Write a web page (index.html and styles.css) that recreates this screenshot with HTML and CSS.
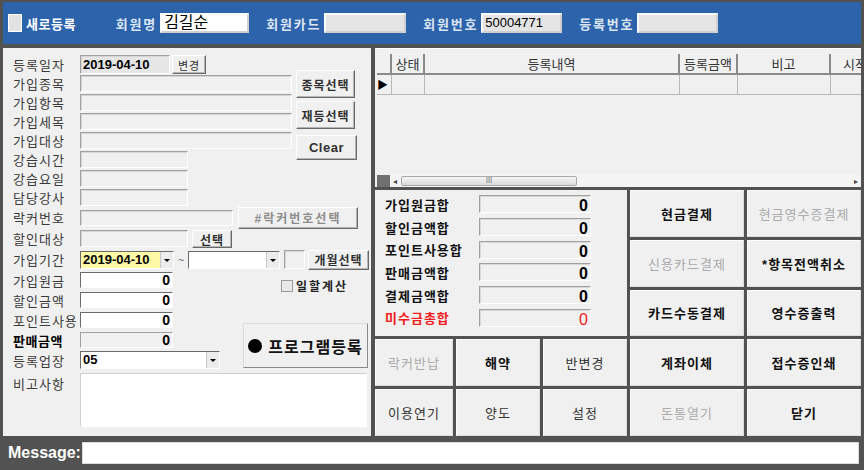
FILE: index.html
```html
<!DOCTYPE html>
<html lang="ko">
<head>
    <meta charset="UTF-8">
    <title>프로그램 등록</title>
    <link rel="stylesheet" href="styles.css">
</head>
<body>
<div class="window">
    <!-- 상단 회원 정보 -->
    <header class="topbar">
        <span class="new-box"></span>
        <span class="new-label">새로등록</span>
        <span class="hdr-label first">회원명</span>
        <span class="hdr-input name">김길순</span>
        <span class="hdr-label">회원카드</span>
        <span class="hdr-input card"></span>
        <span class="hdr-label">회원번호</span>
        <span class="hdr-input">50004771</span>
        <span class="hdr-label">등록번호</span>
        <span class="hdr-input"></span>
    </header>

    <div class="main">
        <!-- 등록 입력 폼 -->
        <section class="form-panel">
            <div class="form-top">
                <div class="form-rows">
                    <div class="row">
                        <span class="lbl">등록일자</span>
                        <span class="field date">2019-04-10</span>
                        <button class="btn tiny">변경</button>
                    </div>
                    <div class="row"><span class="lbl">가입종목</span><span class="field wide"></span></div>
                    <div class="row"><span class="lbl">가입항목</span><span class="field wide"></span></div>
                    <div class="row"><span class="lbl">가입세목</span><span class="field wide"></span></div>
                    <div class="row"><span class="lbl">가입대상</span><span class="field wide"></span></div>
                    <div class="row"><span class="lbl">강습시간</span><span class="field mid"></span></div>
                    <div class="row"><span class="lbl">강습요일</span><span class="field mid"></span></div>
                    <div class="row"><span class="lbl">담당강사</span><span class="field mid"></span></div>
                </div>
                <div class="side-btns">
                    <button class="btn side">종목선택</button>
                    <button class="btn side">재등선택</button>
                    <button class="btn side clear">Clear</button>
                </div>
            </div>

            <div class="row tall">
                <span class="lbl">락커번호</span>
                <span class="field locker"></span>
                <button class="btn locker-btn">#락커번호선택</button>
            </div>
            <div class="row tall">
                <span class="lbl">할인대상</span>
                <span class="field mid"></span>
                <button class="btn pick">선택</button>
            </div>
            <div class="row tall">
                <span class="lbl">가입기간</span>
                <span class="combo from">2019-04-10<i class="drop"></i></span>
                <span class="tilde">~</span>
                <span class="combo to"><i class="drop"></i></span>
                <span class="field months"></span>
                <button class="btn month-btn">개월선택</button>
            </div>

            <div class="form-bottom">
                <div class="money-rows">
                    <div class="row money"><span class="lbl">가입원금</span><span class="field amount">0</span></div>
                    <div class="row money"><span class="lbl">할인금액</span><span class="field amount">0</span></div>
                    <div class="row money"><span class="lbl">포인트사용</span><span class="field amount">0</span></div>
                    <div class="row money"><span class="lbl strong">판매금액</span><span class="field amount off">0</span></div>
                    <div class="row money">
                        <span class="lbl">등록업장</span>
                        <span class="combo place">05<i class="drop"></i></span>
                    </div>
                </div>
                <div class="money-side">
                    <label class="check"><span class="check-box"></span>일할계산</label>
                    <button class="btn register"><span class="dot"></span>프로그램등록</button>
                </div>
            </div>

            <div class="row memo">
                <span class="lbl">비고사항</span>
                <span class="memo-box"></span>
            </div>
        </section>

        <section class="right-col">
            <!-- 등록 내역 그리드 -->
            <div class="grid-panel">
                <table class="grid">
                    <colgroup>
                        <col class="c-sel"><col class="c-state"><col class="c-desc">
                        <col class="c-amt"><col class="c-note"><col class="c-start">
                    </colgroup>
                    <thead>
                        <tr><th></th><th>상태</th><th>등록내역</th><th>등록금액</th><th>비고</th><th class="start">시작</th></tr>
                    </thead>
                    <tbody>
                        <tr><td class="sel">&#9654;</td><td></td><td></td><td></td><td></td><td></td></tr>
                    </tbody>
                </table>
                <div class="hscroll">
                    <span class="corner"></span>
                    <span class="arrow">&#9666;</span>
                    <span class="thumb">&#8546;</span>
                    <span class="track"></span>
                    <span class="arrow">&#9656;</span>
                </div>
            </div>

            <!-- 합계 및 결제 버튼 -->
            <div class="pay-area">
                <div class="totals">
                    <div class="sum-row"><span class="sum-lbl">가입원금합</span><span class="sum-val">0</span></div>
                    <div class="sum-row"><span class="sum-lbl">할인금액합</span><span class="sum-val">0</span></div>
                    <div class="sum-row"><span class="sum-lbl">포인트사용합</span><span class="sum-val">0</span></div>
                    <div class="sum-row"><span class="sum-lbl">판매금액합</span><span class="sum-val">0</span></div>
                    <div class="sum-row"><span class="sum-lbl">결제금액합</span><span class="sum-val">0</span></div>
                    <div class="sum-row due"><span class="sum-lbl">미수금총합</span><span class="sum-val">0</span></div>
                </div>
                <button class="pay-btn bold">현금결제</button>
                <button class="pay-btn off">현금영수증결제</button>
                <button class="pay-btn off">신용카드결제</button>
                <button class="pay-btn bold">*항목전액취소</button>
                <button class="pay-btn bold">카드수동결제</button>
                <button class="pay-btn bold">영수증출력</button>
                <button class="pay-btn off">락커반납</button>
                <button class="pay-btn bold">해약</button>
                <button class="pay-btn">반변경</button>
                <button class="pay-btn bold">계좌이체</button>
                <button class="pay-btn bold">접수증인쇄</button>
                <button class="pay-btn">이용연기</button>
                <button class="pay-btn">양도</button>
                <button class="pay-btn">설정</button>
                <button class="pay-btn off">돈통열기</button>
                <button class="pay-btn bold">닫기</button>
            </div>
        </section>
    </div>

    <footer class="msgbar">
        <span class="msg-label">Message:</span>
        <span class="msg-input"></span>
    </footer>
</div>
</body>
</html>
```

FILE: styles.css
```css
* {
    margin: 0;
    padding: 0;
    box-sizing: border-box;
}

:root {
    --frame: #525252;
    --blue: #2d63ab;
    --face: #f0f0f0;
    --text: #303030;
    --shade: #a0a0a0;
    --dark: #6a6a6a;
}

body {
    width: 864px;
    height: 470px;
    background: var(--frame);
    font-family: "Liberation Sans", "Noto Sans CJK KR", sans-serif;
    color: var(--text);
    overflow: hidden;
}

.window {
    padding: 2px 3px 0 3px;
}

button {
    font-family: inherit;
    color: inherit;
    background: var(--face);
}

/* top bar */
.topbar {
    height: 42px;
    background: var(--blue);
    display: flex;
    align-items: center;
    padding-left: 5px;
}

.new-box {
    width: 14px;
    height: 18px;
    background: #e2e2e2;
    border: 1px solid #fff;
}

.new-label {
    margin-left: 4px;
    color: #fff;
    font-weight: bold;
    font-size: 13px;
    letter-spacing: 0.5px;
}

.hdr-label {
    margin-left: 17px;
    color: #dbe6f6;
    font-weight: bold;
    font-size: 13px;
    letter-spacing: 1.8px;
}

.hdr-label.first {
    margin-left: 40px;
}

.hdr-input {
    margin-left: 3px;
    width: 81px;
    height: 20px;
    background: #e4e4e4;
    border: 2px solid #fafafa;
    border-right-color: #d0d0d0;
    border-bottom-color: #d0d0d0;
    font-size: 13px;
    line-height: 16px;
    padding-left: 2px;
    color: #000;
}

.hdr-input.name {
    width: 89px;
    background: #fff;
    font-size: 16px;
    line-height: 16px;
}

.hdr-input.card {
    width: 82px;
}

/* main layout */
.main {
    margin-top: 4px;
    height: 388px;
    display: grid;
    grid-template-columns: 368px 486px;
    column-gap: 4px;
}

/* left form */
.form-panel {
    background: var(--face);
    padding: 7px 0 0 10px;
    font-size: 13px;
}

.form-top {
    display: flex;
}

.form-rows {
    width: 283px;
}

.row {
    display: flex;
    align-items: center;
    height: 19px;
}

.row.tall {
    height: 21px;
}

.lbl {
    width: 67px;
    flex-shrink: 0;
    font-size: 13px;
    letter-spacing: 1px;
    color: #3a3a3a;
    white-space: nowrap;
}

.lbl.strong {
    font-weight: bold;
    color: #000;
    letter-spacing: 0.5px;
}

.field {
    height: 17px;
    background: var(--face);
    border: 1px solid;
    border-color: var(--shade) #fff #fff var(--shade);
    box-shadow: inset 1px 1px 0 #d6d6d6;
}

.field.date {
    width: 90px;
    height: 19px;
    background: #e6e6e6;
    font-weight: bold;
    color: #000;
    font-size: 13px;
    line-height: 17px;
    padding-left: 2px;
}

.field.wide {
    width: 212px;
}

.field.mid {
    width: 108px;
}

.field.locker {
    width: 153px;
    height: 16px;
}

.field.months {
    width: 21px;
    height: 19px;
    margin-left: 4px;
}

.btn {
    border: 1px solid;
    border-color: #fff var(--dark) var(--dark) #fff;
    box-shadow: inset -1px -1px 0 #b4b4b4;
    font-weight: bold;
    font-size: 12px;
    letter-spacing: 1px;
    cursor: pointer;
}

.btn.tiny {
    margin-left: 2px;
    width: 34px;
    height: 19px;
    font-size: 11px;
    font-weight: normal;
}

.side-btns {
    display: flex;
    flex-direction: column;
    padding-top: 15px;
}

.btn.side {
    width: 59px;
    height: 28px;
    margin-bottom: 3px;
}

.btn.clear {
    margin-top: 3px;
    width: 61px;
    height: 25px;
    font-size: 13px;
    letter-spacing: 0.5px;
}

.btn.locker-btn {
    margin-left: 5px;
    width: 120px;
    height: 22px;
    color: #8c8c8c;
    letter-spacing: 2px;
}

.btn.pick {
    margin-left: 4px;
    width: 40px;
    height: 18px;
}

.combo {
    position: relative;
    height: 18px;
    border: 1px solid;
    border-color: var(--dark) #fff #fff var(--dark);
    background: #fff;
    font-weight: bold;
    color: #000;
    font-size: 13px;
    line-height: 16px;
    padding-left: 2px;
}

.combo.from {
    width: 94px;
    background: #fdf9a6;
}

.combo.to {
    width: 92px;
}

.combo.place {
    width: 140px;
}

.drop {
    position: absolute;
    right: 0;
    top: 0;
    width: 13px;
    height: 16px;
    background: #ececec;
    border-left: 1px solid #c8c8c8;
}

.drop::after {
    content: "";
    position: absolute;
    left: 3px;
    top: 7px;
    border: 3px solid transparent;
    border-top: 3px solid #000;
}

.tilde {
    width: 14px;
    text-align: center;
    font-size: 11px;
    color: #666;
}

.btn.month-btn {
    margin-left: 3px;
    width: 61px;
    height: 20px;
}

.form-bottom {
    display: flex;
}

.money-rows {
    width: 210px;
}

.row.money {
    height: 20px;
}

.field.amount {
    width: 93px;
    height: 16px;
    background: #fff;
    border-color: var(--dark) #fff #fff var(--dark);
    box-shadow: none;
    text-align: right;
    font-weight: bold;
    font-size: 14px;
    line-height: 15px;
    padding-right: 2px;
    color: #000;
}

.field.amount.off {
    background: var(--face);
    border-color: var(--shade) #fff #fff var(--shade);
}

.money-side {
    margin-left: 23px;
    display: flex;
    flex-direction: column;
}

.check {
    margin: 7px 0 0 35px;
    display: flex;
    align-items: center;
    font-weight: bold;
    font-size: 12px;
    letter-spacing: 2px;
    color: #222;
}

.check-box {
    width: 12px;
    height: 12px;
    margin-right: 3px;
    border: 1px solid #9a9a9a;
    background: #e8e8e8;
}

.btn.register {
    margin-top: 29px;
    margin-left: -3px;
    width: 125px;
    height: 45px;
    display: flex;
    align-items: center;
    justify-content: center;
    font-size: 16px;
    letter-spacing: 1px;
    border-color: #dcdcdc #8a8a8a #8a8a8a #dcdcdc;
    box-shadow: none;
    color: #111;
}

.dot {
    width: 14px;
    height: 14px;
    margin-right: 6px;
    border-radius: 50%;
    background: #000;
}

.row.memo {
    align-items: flex-start;
    height: 60px;
    padding-top: 3px;
}

.row.memo .lbl {
    margin-top: 1px;
}

.memo-box {
    width: 287px;
    height: 54px;
    background: #fff;
    border: 1px solid;
    border-color: #cfcfcf #fff #fff #cfcfcf;
}

/* right column */
.right-col {
    display: flex;
    flex-direction: column;
}

.grid-panel {
    height: 139px;
    background: var(--face);
    padding: 5px 0 0 2px;
    display: flex;
    flex-direction: column;
    overflow: hidden;
    border-top: 1px solid #fff;
}

.grid {
    border-collapse: collapse;
    table-layout: fixed;
    width: 503px;
    font-size: 13px;
}

.c-sel { width: 14px; }
.c-state { width: 33px; }
.c-desc { width: 255px; }
.c-amt { width: 58px; }
.c-note { width: 93px; }
.c-start { width: 50px; }

.grid th {
    height: 18px;
    font-weight: normal;
    color: #333;
    border-right: 2px solid #8a8a8a;
    border-bottom: 2px solid #8a8a8a;
    text-align: center;
    white-space: nowrap;
    overflow: hidden;
}

.grid th.start {
    text-align: left;
    padding-left: 12px;
}

.grid td {
    height: 20px;
    border-right: 1px solid #b8b8b8;
    border-bottom: 1px solid #b8b8b8;
}

.grid td.sel {
    font-size: 11px;
    color: #000;
}

.hscroll {
    margin-top: auto;
    height: 12px;
    display: flex;
    align-items: center;
    background: #f4f4f4;
}

.corner {
    width: 13px;
    height: 12px;
    background: #707070;
}

.arrow {
    width: 10px;
    text-align: center;
    font-size: 8px;
    color: #444;
}

.thumb {
    margin-left: 1px;
    width: 176px;
    height: 10px;
    background: linear-gradient(#f6f6f6, #dadada);
    border: 1px solid #a8a8a8;
    border-radius: 2px;
    font-size: 7px;
    line-height: 8px;
    text-align: center;
    color: #666;
}

.track {
    flex: 1;
}

/* totals and pay buttons */
.pay-area {
    margin-top: 3px;
    flex: 1;
    display: grid;
    grid-template-columns: 78px 84px 84px 114px 114px;
    grid-template-rows: repeat(5, 1fr);
    gap: 3px;
}

.totals {
    grid-column: 1 / 4;
    grid-row: 1 / 4;
    background: var(--face);
    padding: 3px 0 0 10px;
}

.sum-row {
    height: 22.7px;
    display: flex;
    align-items: center;
}

.sum-lbl {
    width: 94px;
    font-weight: bold;
    font-size: 13px;
    letter-spacing: 1px;
    color: #111;
    white-space: nowrap;
}

.sum-val {
    width: 112px;
    height: 18px;
    background: var(--face);
    border: 1px solid;
    border-color: var(--shade) #fff #fff var(--shade);
    box-shadow: inset 1px 1px 0 #d8d8d8;
    text-align: right;
    font-weight: bold;
    font-size: 16px;
    line-height: 19px;
    padding-right: 2px;
    color: #000;
}

.sum-row.due .sum-lbl {
    color: #f02020;
}

.sum-row.due .sum-val {
    color: #f02020;
    font-weight: normal;
}

.pay-btn {
    border: 1px solid #fbfbfb;
    border-right-color: #dcdcdc;
    border-bottom-color: #dcdcdc;
    font-size: 13px;
    letter-spacing: 1px;
    color: #333;
    cursor: pointer;
}

.pay-btn.bold {
    font-weight: bold;
    color: #111;
}

.pay-btn.off {
    color: #ababab;
}

/* message bar */
.msgbar {
    height: 34px;
    display: flex;
    align-items: center;
    padding-left: 5px;
}

.msg-label {
    color: #fff;
    font-weight: bold;
    font-size: 16px;
    width: 74px;
}

.msg-input {
    width: 777px;
    height: 22px;
    background: #fff;
    border: 1px solid #dcdcdc;
}
```
